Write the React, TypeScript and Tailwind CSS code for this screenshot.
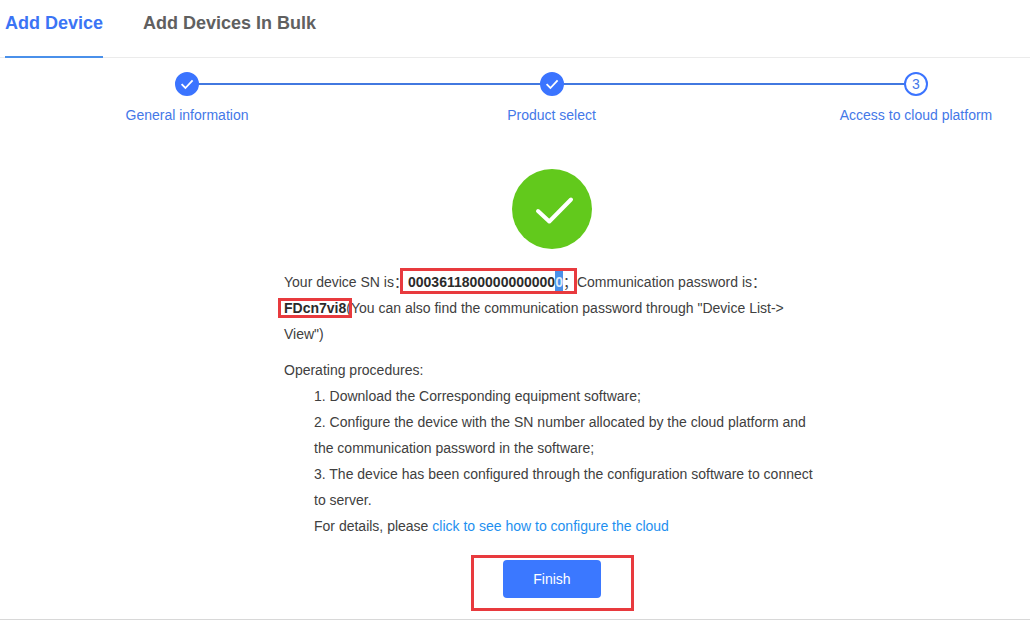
import React from 'react';

const tabs = [
  { label: 'Add Device', active: true },
  { label: 'Add Devices In Bulk', active: false },
];

const steps = [
  { label: 'General information', done: true },
  { label: 'Product select', done: true },
  { label: 'Access to cloud platform', done: false },
];

const procedures = [
  'Download the Corresponding equipment software;',
  'Configure the device with the SN number allocated by the cloud platform and the communication password in the software;',
  'The device has been configured through the configuration software to connect to server.',
];

function Tabs() {
  return (
    <nav className="flex gap-10 pl-[5px] border-b border-[#ebebeb]">
      {tabs.map((tab) => (
        <button
          key={tab.label}
          type="button"
          className={`-mb-px h-[58px] border-b-2 pb-2.5 text-lg font-bold ${
            tab.active ? 'border-[#4a90ea] text-[#3b74f5]' : 'border-transparent text-[#606060]'
          }`}
        >
          {tab.label}
        </button>
      ))}
    </nav>
  );
}

function Steps() {
  return (
    <div className="relative mt-3.5">
      <div className="absolute left-[187px] right-[114px] top-[11px] h-0.5 bg-[#4278e0]" />
      <ol className="relative flex justify-between pl-[110px] pr-[37px] text-sm text-[#4478e8]">
        {steps.map((step, index) => (
          <li key={step.label} className="flex w-[154px] flex-col items-center gap-2.5">
            <span
              className={`flex h-6 w-6 items-center justify-center rounded-full border-2 border-[#3b74ff] ${
                step.done ? 'bg-[#3b74ff]' : 'bg-white'
              }`}
            >
              {step.done ? (
                <svg width="14" height="14" viewBox="0 0 14 14" fill="none" stroke="white" strokeWidth="1.8">
                  <path d="M1.6 7.2 L5.4 11 L12.6 3.4" />
                </svg>
              ) : (
                index + 1
              )}
            </span>
            <span className="whitespace-nowrap leading-[18px]">{step.label}</span>
          </li>
        ))}
      </ol>
    </div>
  );
}

function DeviceInfo() {
  return (
    <p>
      Your device SN is：
      <span className="relative whitespace-nowrap">
        <strong className="text-[#2b2b2b]">
          0003611800000000000
          <mark className="bg-[#4a90e8] py-1 text-[#dcebfb]">0</mark>
        </strong>
        ；
        <span className="absolute -bottom-1 -left-2 -top-1.5 right-0 border-3 border-[#e83a3e]" />
      </span>
      Communication password is：
      <span className="relative">
        <strong className="text-[#2b2b2b]">FDcn7vi8</strong>
        <span className="absolute -inset-x-1.5 -inset-y-0.5 border-3 border-[#e83a3e]" />
      </span>
      (You can also find the communication password through "Device List-&gt; View")
    </p>
  );
}

export default function App() {
  return (
    <div className="border-b border-[#d8d8d8] bg-white pb-2 font-['Liberation_Sans','Noto_Sans_CJK_SC',sans-serif]">
      <Tabs />
      <Steps />
      <main className="flex flex-col items-center pl-[74px] pt-[45px]">
        <svg className="h-20 w-20" viewBox="0 0 80 80" fill="none">
          <circle cx="40" cy="40" r="40" fill="#62c91c" />
          <path
            d="M26 42 L37.3 52.5 L59 30.5"
            stroke="white"
            strokeWidth="4"
            strokeLinecap="round"
            strokeLinejoin="round"
          />
        </svg>
        <section className="mt-5 w-full max-w-[536px] text-sm leading-[26px] text-[#404040]">
          <DeviceInfo />
          <div className="mt-2.5">
            <p>Operating procedures:</p>
            <div className="pl-[30px]">
              <ol>
                {procedures.map((text, index) => (
                  <li key={text}>{`${index + 1}. ${text}`}</li>
                ))}
              </ol>
              <p>
                For details, please{' '}
                <a href="#guide" className="text-[#1e8fef]">
                  click to see how to configure the cloud
                </a>
              </p>
            </div>
          </div>
        </section>
        <div className="mt-4 flex h-14 w-[163px] justify-center border-3 border-[#e83a3e] pt-0.5">
          <button type="button" className="h-[38px] w-[98px] rounded-sm bg-[#3b78ff] text-sm text-white">
            Finish
          </button>
        </div>
      </main>
    </div>
  );
}
